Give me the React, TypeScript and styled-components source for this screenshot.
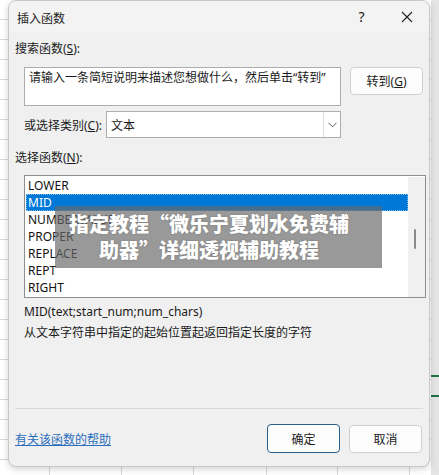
import React from "react";
import styled, { createGlobalStyle } from "styled-components";

const Global = createGlobalStyle`
  html, body { margin: 0; padding: 0; }
  body {
    width: 439px;
    height: 475px;
    overflow: hidden;
    background-color: #ffffff;
    background-image:
      linear-gradient(to right, transparent 431px, #e4e4e4 431px),
      repeating-linear-gradient(to bottom, transparent 0 19px, #d9d9d9 19px 20px),
      repeating-linear-gradient(to right, transparent 0 49px, #d9d9d9 49px 50px, transparent 50px 121px, #d9d9d9 121px 122px, transparent 122px 193px, #d9d9d9 193px 194px, transparent 194px 266px, #d9d9d9 266px 267px, transparent 267px 337px, #d9d9d9 337px 338px, transparent 338px 409px, #d9d9d9 409px 410px, transparent 410px 439px);
    font-family: "Segoe UI", "Noto Sans", "Noto Sans CJK SC", sans-serif;
    position: relative;
  }
`;

const Sheet = styled.div`
  position: relative;
  width: 439px;
  height: 475px;
`;

const SelectionMark = styled.div`
  position: absolute;
  left: 431px;
  width: 8px;
  height: 2px;
  background: #217346;
`;

const Dialog = styled.div`
  position: absolute;
  left: 8px;
  top: 0;
  width: 422px;
  height: 467px;
  box-sizing: border-box;
  background: #f0f0f0;
  border: 1px solid #c8c8c8;
  border-radius: 8px;
  box-shadow: 0 2px 6px rgba(0, 0, 0, 0.18);
  display: flex;
  flex-direction: column;
  overflow: hidden;
  color: #1a1a1a;
  font-size: 12px;
`;

const TitleBar = styled.div`
  height: 31px;
  display: flex;
  align-items: center;
  padding: 0 0 0 8px;
  background: #f3f3f3;
  font-size: 12px;
`;

const Title = styled.span`
  flex: 1;
  padding-top: 2px;
`;

const TitleBtn = styled.span`
  width: 45px;
  text-align: center;
  font-size: 14px;
  color: #222;
  display: flex;
  justify-content: center;
`;

const Body = styled.div`
  flex: 1;
  display: flex;
  flex-direction: column;
  padding: 0 6px 0 6px;
`;

const Label = styled.div<{ $indent?: number; $top?: number }>`
  padding-left: ${(p) => p.$indent ?? 0}px;
  margin-top: ${(p) => p.$top ?? 0}px;
  line-height: 16px;
  font-size: 12px;
`;

const U = styled.span`
  text-decoration: underline;
`;

const SearchRow = styled.div`
  display: flex;
  gap: 9px;
  margin-top: 10px;
  padding-left: 9px;
`;

const SearchBox = styled.div`
  width: 318px;
  height: 39px;
  box-sizing: border-box;
  background: #fff;
  border: 1px solid #adadad;
  padding: 2px 4px;
  font-size: 12px;
  line-height: 16px;
`;

const Button = styled.div<{ $primary?: boolean }>`
  width: 73px;
  height: ${(p) => (p.$primary ? 29 : 28)}px;
  box-sizing: border-box;
  background: #fdfdfd;
  border: 1px solid ${(p) => (p.$primary ? "#2b5e86" : "#d0d0d0")};
  border-radius: 4px;
  display: flex;
  align-items: center;
  justify-content: center;
  font-size: 12px;
  color: #1a1a1a;
`;

const CategoryRow = styled.div`
  display: flex;
  align-items: center;
  margin-top: 5px;
  padding-left: 9px;
`;

const CatLabel = styled.span`
  width: 82px;
  font-size: 12px;
`;

const Select = styled.div`
  width: 235px;
  height: 27px;
  box-sizing: border-box;
  border: 1px solid #adadad;
  background: #fff;
  display: flex;
  align-items: stretch;
`;

const SelectText = styled.span`
  flex: 1;
  padding-left: 4px;
  display: flex;
  align-items: center;
`;

const SelectArrow = styled.span`
  width: 16px;
  border-left: 1px solid #dcdcdc;
  display: flex;
  align-items: center;
  justify-content: center;
`;

const ListBox = styled.div`
  margin: 9px 0 0 9px;
  width: 402px;
  height: 123px;
  box-sizing: border-box;
  border: 1px solid #8e8e8e;
  background: #fff;
  display: flex;
  padding: 1px 0 0 1px;
`;

const Items = styled.div`
  flex: 1;
  display: flex;
  flex-direction: column;
`;

const Item = styled.div<{ $sel?: boolean }>`
  height: 17px;
  line-height: 17px;
  padding-left: 2px;
  box-sizing: border-box;
  font-size: 12px;
  background: ${(p) => (p.$sel ? "#0078d7" : "transparent")};
  color: ${(p) => (p.$sel ? "#fff" : "#111")};
  outline: ${(p) => (p.$sel ? "1px dotted #7fb6e8" : "none")};
  outline-offset: -1px;
`;

const ScrollTrack = styled.div`
  width: 17px;
  background: #f0f0f0;
  position: relative;
`;

const Thumb = styled.div`
  position: absolute;
  left: 6px;
  top: 52px;
  width: 2px;
  height: 20px;
  background: #8a8a8a;
  border-radius: 1px;
`;

const Desc = styled.div`
  padding-left: 9px;
  margin-top: 6px;
  display: flex;
  flex-direction: column;
  gap: 5px;
  font-size: 12px;
  line-height: 16px;
`;

const Spacer = styled.div`
  flex: 1;
`;

const Separator = styled.div`
  height: 1px;
  background: #d8d8d8;
`;

const Footer = styled.div`
  height: 55px;
  display: flex;
  align-items: center;
  gap: 9px;
  padding-right: 1px;
  padding-top: 2px;
`;

const Help = styled.span`
  flex: 1;
  color: #2a6ebd;
  text-decoration: underline;
  font-size: 12px;
`;

const Overlay = styled.div`
  position: absolute;
  left: 55px;
  top: 206px;
  width: 327px;
  height: 62px;
  box-sizing: border-box;
  padding-right: 19px;
  background: rgba(105, 105, 105, 0.68);
  color: #fff;
  font-weight: 900;
  font-size: 20px;
  line-height: 26px;
  text-align: center;
  display: flex;
  align-items: center;
  justify-content: center;
  font-family: "Noto Sans CJK SC", sans-serif;
  text-shadow: 0 0 2px rgba(0, 0, 0, 0.25);
  white-space: nowrap;
`;

const items = ["LOWER", "MID", "NUMBERVALUE", "PROPER", "REPLACE", "REPT", "RIGHT"];

export default function App() {
  return (
    <>
      <Global />
      <Sheet>
        <SelectionMark style={{ top: 375 }} />
        <SelectionMark style={{ top: 395 }} />
        <Dialog>
          <TitleBar>
            <Title>插入函数</Title>
            <TitleBtn>?</TitleBtn>
            <TitleBtn>
              <svg width="12" height="12" viewBox="0 0 12 12">
                <path d="M1 1 L11 11 M11 1 L1 11" stroke="#222" strokeWidth="1.1" />
              </svg>
            </TitleBtn>
          </TitleBar>
          <Body>
            <Label $top={9}>
              搜索函数(<U>S</U>):
            </Label>
            <SearchRow>
              <SearchBox>请输入一条简短说明来描述您想做什么，然后单击“转到”</SearchBox>
              <Button>
                转到(<U>G</U>)
              </Button>
            </SearchRow>
            <CategoryRow>
              <CatLabel>
                或选择类别(<U>C</U>):
              </CatLabel>
              <Select>
                <SelectText>文本</SelectText>
                <SelectArrow>
                  <svg width="9" height="6" viewBox="0 0 9 6">
                    <path d="M0.5 0.8 L4.5 4.8 L8.5 0.8" fill="none" stroke="#555" strokeWidth="1" />
                  </svg>
                </SelectArrow>
              </Select>
            </CategoryRow>
            <Label $top={12}>
              选择函数(<U>N</U>):
            </Label>
            <ListBox>
              <Items>
                {items.map((it) => (
                  <Item key={it} $sel={it === "MID"}>
                    {it}
                  </Item>
                ))}
              </Items>
              <ScrollTrack>
                <Thumb />
              </ScrollTrack>
            </ListBox>
            <Desc>
              <span>MID(text;start_num;num_chars)</span>
              <span>从文本字符串中指定的起始位置起返回指定长度的字符</span>
            </Desc>
            <Spacer />
            <Separator />
            <Footer>
              <Help>有关该函数的帮助</Help>
              <Button $primary>确定</Button>
              <Button>取消</Button>
            </Footer>
          </Body>
        </Dialog>
        <Overlay>
          指定教程“微乐宁夏划水免费辅
          <br />
          助器”详细透视辅助教程
        </Overlay>
      </Sheet>
    </>
  );
}
